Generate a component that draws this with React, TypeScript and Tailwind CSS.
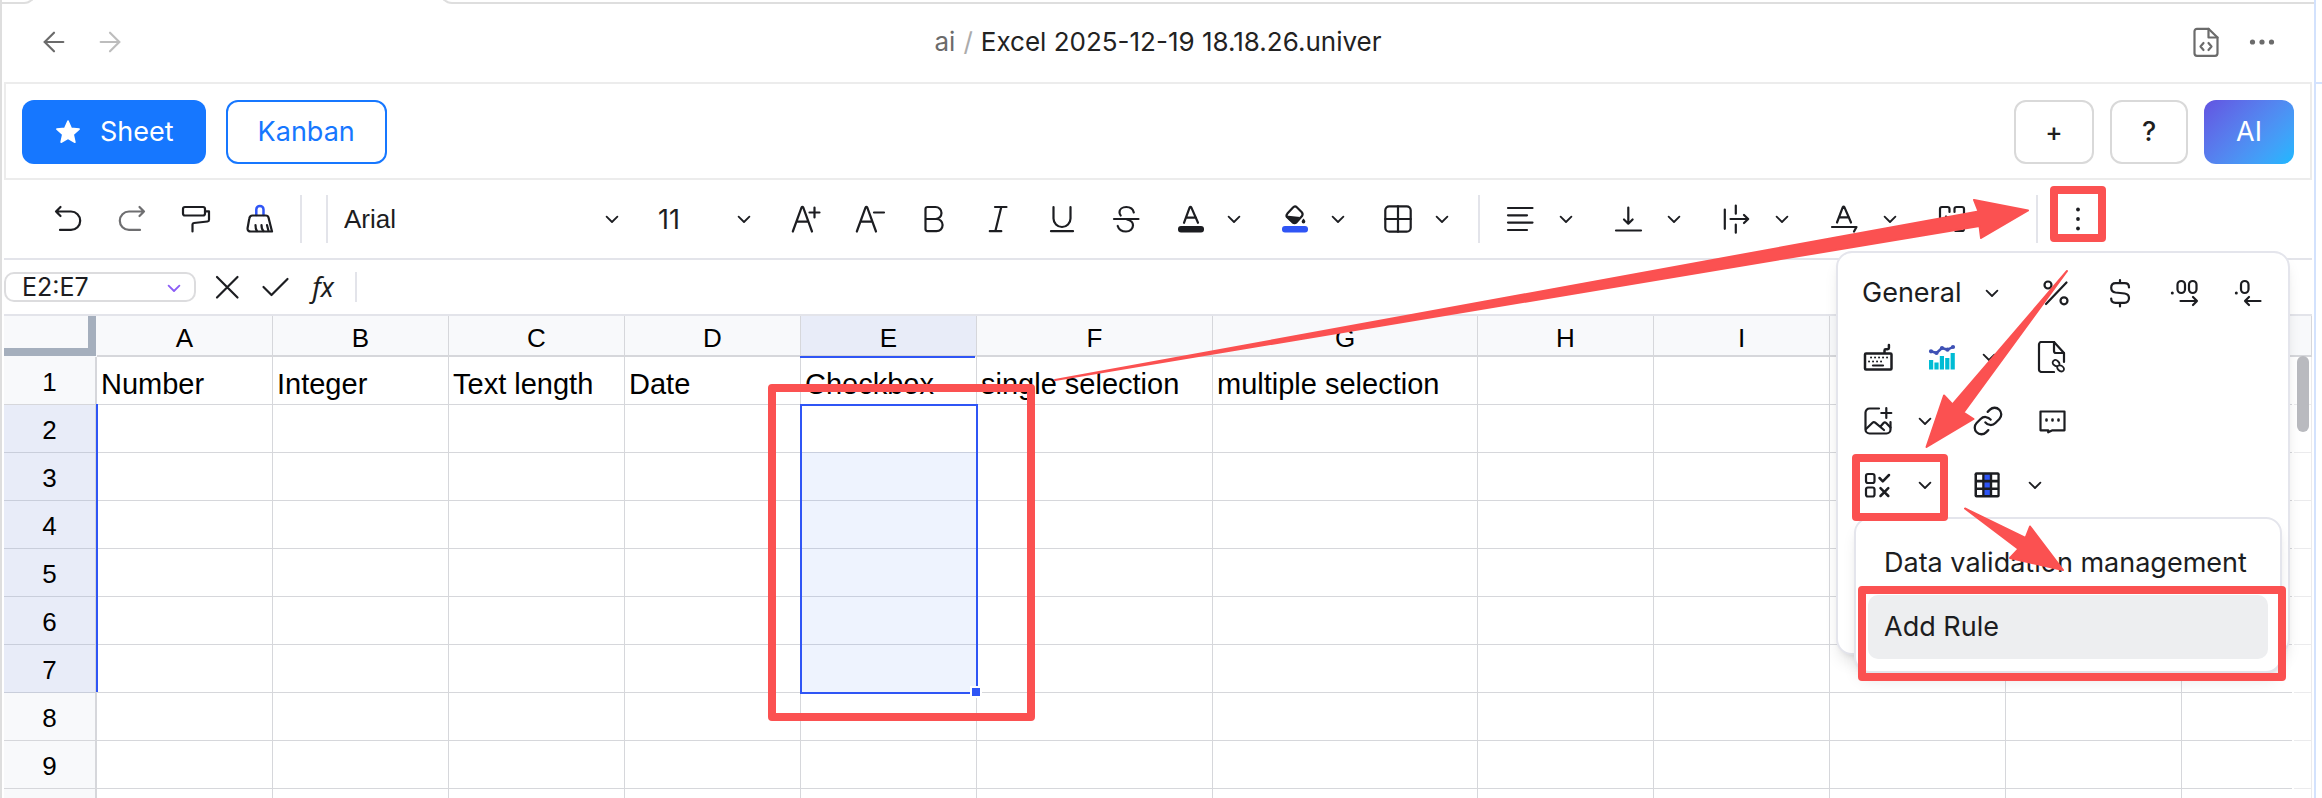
/**
 * Sheet Editor Page
 *
 * Spreadsheet view with the overflow toolbar and the data validation menu open.
 */

import type { ReactNode } from 'react'
import clsx from 'clsx'
import { ArrowLeft, ArrowRight, Link as LinkIcon } from 'lucide-react'

const COLUMNS = [
  { name: 'A', width: 'w-44', title: 'Number' },
  { name: 'B', width: 'w-44', title: 'Integer' },
  { name: 'C', width: 'w-44', title: 'Text length' },
  { name: 'D', width: 'w-44', title: 'Date' },
  { name: 'E', width: 'w-44', title: 'Checkbox' },
  { name: 'F', width: 'w-[236px]', title: 'single selection' },
  { name: 'G', width: 'w-[265px]', title: 'multiple selection' },
  { name: 'H', width: 'w-44', title: '' },
  { name: 'I', width: 'w-44', title: '' },
  { name: 'J', width: 'w-44', title: '' },
  { name: 'K', width: 'w-44', title: '' },
  { name: 'L', width: '', title: '' },
]

const ROWS = [1, 2, 3, 4, 5, 6, 7, 8, 9]

const isSelectedRow = (row: number) => row >= 2 && row <= 7

function Icon({ children, className }: { children: ReactNode; className?: string }) {
  return (
    <svg
      viewBox="0 0 32 32"
      fill="none"
      stroke="currentColor"
      strokeWidth="2.2"
      strokeLinecap="round"
      strokeLinejoin="round"
      aria-hidden="true"
      className={clsx('size-8 shrink-0', className)}
    >
      {children}
    </svg>
  )
}

function Chevron({ className }: { className?: string }) {
  return (
    <svg
      viewBox="0 0 16 16"
      fill="none"
      stroke="currentColor"
      strokeWidth="1.8"
      strokeLinecap="round"
      strokeLinejoin="round"
      aria-hidden="true"
      className={clsx('size-4 shrink-0', className)}
    >
      <path d="M2.6 5.6 8 11l5.4-5.4" />
    </svg>
  )
}

function ToolButton({ label, children, className }: { label: string; children: ReactNode; className?: string }) {
  return (
    <button
      type="button"
      aria-label={label}
      className={clsx('flex h-16 w-16 shrink-0 items-center justify-center', className)}
    >
      <Icon>{children}</Icon>
    </button>
  )
}

function MoreOptions({ label, className }: { label: string; className: string }) {
  return (
    <button
      type="button"
      aria-label={label}
      className={clsx('mr-4 flex h-16 shrink-0 items-center justify-center', className)}
    >
      <Chevron />
    </button>
  )
}

function Divider({ className }: { className?: string }) {
  return <div className={clsx('h-12 w-0.5 shrink-0 bg-[#e3e4ea]', className)} />
}

function TitleBar() {
  return (
    <header className="flex h-[78px] shrink-0 items-center justify-between px-9 pb-0.5 text-[#6b6b6b]">
      <div className="flex flex-1 items-center gap-6">
        <button type="button" aria-label="Back" className="flex size-8 items-center justify-center">
          <ArrowLeft size={32} strokeWidth={1.6} />
        </button>
        <button type="button" aria-label="Forward" className="flex size-8 items-center justify-center text-[#bdbdbd]">
          <ArrowRight size={32} strokeWidth={1.6} />
        </button>
      </div>
      <div className="flex items-center gap-2 text-[26px] leading-8">
        <a href="#ai">ai</a>
        <span className="text-[#ababab]">/</span>
        <h1 className="text-[#222222]">Excel 2025-12-19 18.18.26.univer</h1>
      </div>
      <div className="flex flex-1 items-center justify-end gap-6">
        <button type="button" aria-label="View source">
          <Icon>
            <path d="M18.5 2.8H7A2.5 2.5 0 0 0 4.5 5.3v22A2.5 2.5 0 0 0 7 29.8h18a2.5 2.5 0 0 0 2.5-2.5V11.5z" />
            <path d="M18.5 2.8v8.7h9" />
            <path d="M13.5 17 10.500 20.500l3 3.500M18.500 17l3 3.500-3 3.500" />
          </Icon>
        </button>
        <button type="button" aria-label="More options">
          <Icon>
            <g fill="currentColor" stroke="none">
              <circle cx="6.5" cy="16" r="2.6" />
              <circle cx="16" cy="16" r="2.6" />
              <circle cx="25.5" cy="16" r="2.6" />
            </g>
          </Icon>
        </button>
      </div>
    </header>
  )
}

function ViewBar() {
  return (
    <div className="flex shrink-0 items-center justify-between border-2 border-[#ececec] px-4 pt-4 pb-3.5 text-[27px] leading-8">
      <div className="flex items-center gap-5">
        <button type="button" className="flex h-16 items-center gap-[18px] rounded-xl bg-[#1677ff] px-8 text-white">
          <svg viewBox="0 0 28 28" className="size-7" fill="currentColor" aria-hidden="true">
            <path
              d="m14 3 3.2 7.3 7.9.8-5.9 5.3 1.7 7.8L14 20.2l-6.9 4 1.7-7.8-5.9-5.3 7.9-.8z"
              stroke="currentColor"
              strokeWidth="1.6"
              strokeLinejoin="round"
            />
          </svg>
          Sheet
        </button>
        <button
          type="button"
          className="flex h-16 items-center rounded-xl border-2 border-[#1677ff] px-[30px] text-[#1677ff]"
        >
          Kanban
        </button>
      </div>
      <div className="flex items-center gap-4 font-medium text-[#1f1f1f]">
        <button type="button" className="h-16 w-20 rounded-xl border-2 border-[#d9d9d9] text-[26px]">
          +
        </button>
        <button type="button" className="h-16 w-[78px] rounded-xl border-2 border-[#d9d9d9]">
          ?
        </button>
        <button
          type="button"
          className="h-16 w-[90px] rounded-xl bg-linear-135 from-[#6253e1] to-[#18b8ff] font-normal text-white"
        >
          AI
        </button>
      </div>
    </div>
  )
}

function Toolbar() {
  return (
    <div className="flex h-20 shrink-0 items-center border-b-2 border-[#e3e4ea] pl-8 text-[#1c1d21]">
      <ToolButton label="Undo">
        <path d="M4 8.500h15a9.200 9.200 0 0 1 0 18.400H8M8.500 4 4 8.500 8.500 13" />
      </ToolButton>
      <ToolButton label="Redo" className="text-[#6e6e70]">
        <path d="M28 8.500H13a9.200 9.200 0 0 0 0 18.400h11M23.500 4 28 8.500 23.500 13" />
      </ToolButton>
      <ToolButton label="Format painter">
        <rect x="3" y="4" width="22" height="8.500" rx="2" />
        <path d="M25 8.300h4v8.500c0 1-.5 1.600-1.500 1.700L14 20c-1 .1-1.500.6-1.500 1.500v7" />
      </ToolButton>
      <ToolButton label="Clear formatting">
        <path d="M12.300 12V6.500a3.600 3.600 0 0 1 7.200 0V12" stroke="#2f55f5" strokeWidth="2.500" />
        <path d="M8.500 12.500h13.300c1.500 0 2.300.6 2.700 2l3.500 14H7c-2.500 0-3.700-1.200-3.400-3.500l1.700-9.500c.3-2 1.300-3 3.200-3z" />
        <path d="M11.500 22c0 3 .5 5 1.500 6M17.500 22c0 3 .7 5 2 6M23 22l1.500 6" />
      </ToolButton>
      <Divider className="ml-2" />
      <Divider className="ml-6 bg-[#dcdcde]" />

      <div className="relative mr-4 w-[300px] shrink-0">
        <select
          aria-label="Font family"
          className="h-12 w-full appearance-none pl-4 font-['Liberation_Sans',Arial,sans-serif] text-[26px] leading-8"
          defaultValue="Arial"
        >
          <option>Arial</option>
        </select>
        <Chevron className="pointer-events-none absolute top-4 right-2" />
      </div>
      <div className="relative mr-3.5 w-[116px] shrink-0">
        <input
          aria-label="Font size"
          className="h-12 w-full pl-3.5 text-[27px] leading-8"
          defaultValue="11"
        />
        <Chevron className="pointer-events-none absolute top-4 right-2" />
      </div>

      <ToolButton label="Increase font size">
        <path d="M2.800 28.500 11.500 4.600q.9-1.600 1.800 0L22 28.500M6.500 18.700h12M24.500 4.500v10M19.500 9.500h10" />
      </ToolButton>
      <ToolButton label="Decrease font size">
        <path d="M2.800 28.500 11.500 4.600q.9-1.600 1.800 0L22 28.500M6.500 18.700h12M20 9.500h10" />
      </ToolButton>
      <ToolButton label="Bold">
        <path d="M7.500 16h10a6 6 0 0 0 0-12h-8a2 2 0 0 0-2 2v20a2 2 0 0 0 2 2.200h9a6 6 0 0 0 0-12.200" />
      </ToolButton>
      <ToolButton label="Italic">
        <path d="M13 4h11.500M7.800 28.200h11.500M19.300 4l-6 24.200" />
      </ToolButton>
      <ToolButton label="Underline">
        <path d="M7.500 4v11.500a8.500 8.500 0 0 0 17 0V4M5 28.200h22" />
      </ToolButton>
      <ToolButton label="Strikethrough">
        <path d="M4 16h24.500M23.800 9.500C23 6 20 4 16.300 4c-4 0-6.800 2.300-6.800 5.300 0 1.200.3 2.300 1.200 3.200M17 16.500c4 .8 6 2.800 6 5.800 0 3.500-3 6.200-7 6.200s-7.200-2-8.300-5.500" />
      </ToolButton>
      <ToolButton label="Text color">
        <path d="m10 19.800 5.600-15.200q.9-1.400 1.800 0L24 19.800M12 14.700h10" />
        <rect x="4" y="23" width="26" height="6.500" rx="3" fill="currentColor" stroke="none" />
      </ToolButton>
      <MoreOptions label="Text color options" className="w-6" />
      <ToolButton label="Fill color">
        <path d="M15 4.500q2-2 3.800-.2l5 5q1.500 1.800.2 3.800l-5.500 6.200q-2 1.700-4 0l-5.300-5q-1.500-1.700.2-3.700z" />
        <path d="M8 12.500 22 14l-4 5.800q-2 1.500-3.800 0L9 15z" fill="currentColor" stroke="none" />
        <path d="M25.500 15.500c-1.200 1.500-1.800 2.300-1.800 3.200a1.800 1.800 0 0 0 3.600 0c0-.9-.6-1.700-1.800-3.200z" fill="currentColor" stroke="none" />
        <rect x="4" y="23" width="26" height="6.500" rx="3" fill="#2f55f5" stroke="none" />
      </ToolButton>
      <MoreOptions label="Fill color options" className="w-6" />
      <ToolButton label="Borders">
        <rect x="3.300" y="3.300" width="25.400" height="25.400" rx="4" />
        <path d="M16 3.300v25.400M3.300 16h25.400" />
      </ToolButton>
      <MoreOptions label="Border options" className="w-6" />
      <Divider className="mr-2 ml-2" />

      <ToolButton label="Horizontal align">
        <path d="M4 5h24.500M4 12.300h19M4 19.600h24.500M4 27h19" />
      </ToolButton>
      <MoreOptions label="Horizontal align options" className="w-7" />
      <ToolButton label="Vertical align">
        <path d="M16.300 4.500v16M12 16.500l4.300 4.200 4.300-4.200M4 27.500h25" />
      </ToolButton>
      <MoreOptions label="Vertical align options" className="w-7" />
      <ToolButton label="Text wrap">
        <path d="M4.800 6.500v19.300M15.800 2.500v8.200M15.800 21.500v8.200M10.500 16H28M24 12l4.200 4-4.200 4" />
      </ToolButton>
      <MoreOptions label="Text wrap options" className="w-7" />
      <ToolButton label="Text rotation">
        <path d="m9 19.500 5.700-15.100q.9-1.400 1.800 0L23 19.500M11 14.300h10M4 24h24.500l-2.500 4.500" />
      </ToolButton>
      <MoreOptions label="Text rotation options" className="w-7" />
      <ToolButton label="Merge cells">
        <path d="M13.500 9V6a2 2 0 0 0-2-2H6a2 2 0 0 0-2 2v20a2 2 0 0 0 2 2h5.500a2 2 0 0 0 2-2v-3" />
        <path d="M18.500 9V6a2 2 0 0 1 2-2H26a2 2 0 0 1 2 2v20a2 2 0 0 1-2 2h-5.500a2 2 0 0 1-2-2v-3" />
        <path d="M5 16h7M10 13.500l2.500 2.500-2.500 2.500M27 16h-7M22 13.500 19.500 16l2.500 2.500" />
      </ToolButton>
      <MoreOptions label="Merge options" className="w-7" />
      <Divider className="mr-2 ml-2" />
      <ToolButton label="More tools">
        <g fill="currentColor" stroke="none">
          <circle cx="16" cy="6.500" r="1.900" />
          <circle cx="16" cy="16" r="1.900" />
          <circle cx="16" cy="25.500" r="1.900" />
        </g>
      </ToolButton>
    </div>
  )
}

function FormulaBar() {
  return (
    <div className="flex h-14 shrink-0 items-center border-b-2 border-[#e3e4ea] text-[#1c1d21]">
      <div className="relative w-48 shrink-0">
        <input
          aria-label="Name box"
          className="h-[30px] w-full rounded-[10px] border-2 border-[#dcdcde] pl-4 text-[25px] leading-6"
          defaultValue="E2:E7"
        />
        <Chevron className="pointer-events-none absolute top-2 right-3.5 text-[#8b5cf6]" />
      </div>
      <button type="button" aria-label="Cancel" className="ml-[15px] flex size-8 items-center justify-center">
        <Icon>
          <path d="m6 6 20.500 20.500M26.500 6 6 26.500" />
        </Icon>
      </button>
      <button type="button" aria-label="Confirm" className="ml-4 flex size-8 items-center justify-center">
        <Icon>
          <path d="m4.500 16 8 8L28.500 8" />
        </Icon>
      </button>
      <button
        type="button"
        aria-label="Insert function"
        className="ml-4 h-8 w-8 font-['Noto_Sans',sans-serif] text-[27px] leading-7 italic"
      >
        fx
      </button>
      <div className="ml-4 h-[30px] w-0.5 bg-[#e3e4ea]" />
      <input aria-label="Formula" className="h-[30px] flex-1 px-3 text-[25px]" />
    </div>
  )
}

function Grid() {
  return (
    <div className="relative min-h-0 flex-1 overflow-hidden font-['Liberation_Sans',Arial,sans-serif] text-black">
      <table className="w-full table-fixed border-separate border-spacing-0">
        <colgroup>
          <col className="w-[93px]" />
          {COLUMNS.map((column) => (
            <col key={column.name} className={column.width} />
          ))}
        </colgroup>
        <thead>
          <tr className="h-[41px] bg-[#f8f9fb]">
            <td className="relative">
              <div className="absolute inset-x-0 top-0 h-10 w-[92px] border-r-8 border-b-8 border-[#a5afbd]" />
            </td>
            {COLUMNS.map((column) => (
              <th
                key={column.name}
                scope="col"
                className={clsx(
                  'relative border-r border-b-2 border-r-[#d6d7db] border-b-[#d6d7db] p-0 pt-1 text-[26px] leading-8 font-normal',
                  column.name === 'E' && 'bg-[#e8ecf8]'
                )}
              >
                {column.name}
                {column.name === 'E' && (
                  <span className="absolute -bottom-[3px] -left-px h-0.5 w-full bg-[#2f55f5]" />
                )}
              </th>
            ))}
          </tr>
        </thead>
        <tbody>
          {ROWS.map((row) => (
            <tr key={row} className="h-12">
              <th
                scope="row"
                className={clsx(
                  'relative border-r-2 border-b border-[#d6d7db] p-0 pt-0.5 text-[26px] leading-8 font-normal',
                  isSelectedRow(row) ? 'border-b-[#c9cedb] bg-[#e8ecf8]' : 'bg-[#f8f9fb]'
                )}
              >
                {row}
                {isSelectedRow(row) && (
                  <span className="absolute -top-px -right-[3px] h-12 w-0.5 bg-[#2f55f5]" />
                )}
              </th>
              {COLUMNS.map((column) => {
                const inRange = column.name === 'E' && isSelectedRow(row)
                return (
                  <td
                    key={column.name}
                    className={clsx(
                      'border-r border-b border-[#d6d7db] p-0 pb-1 pl-1 align-bottom text-[29px] leading-8 whitespace-nowrap',
                      inRange && 'relative border-b-[#c9cfde]',
                      inRange && row > 2 && 'bg-[#eef3fe]'
                    )}
                  >
                    {row === 1 && column.title}
                    {inRange && row === 2 && (
                      <div className="absolute -top-px -left-px z-10 h-[290px] w-[calc(100%+3px)] border-2 border-[#2f55f5]">
                        <span className="absolute -right-1.5 -bottom-1.5 size-3 border-2 border-white bg-[#2f55f5]" />
                      </div>
                    )}
                  </td>
                )
              })}
            </tr>
          ))}
          {/* Rest of the sheet */}
          <tr className="h-12">
            <td className="border-r-2 border-[#d6d7db] bg-[#f8f9fb]" />
            {COLUMNS.map((column) => (
              <td key={column.name} className="border-r border-[#d6d7db]" />
            ))}
          </tr>
        </tbody>
      </table>

      {/* Vertical scrollbar */}
      <div className="absolute top-[41px] right-0 bottom-0 w-5 border-l-2 border-white bg-white/50">
        <div className="mx-auto -mt-px h-[76px] w-3 rounded-full bg-[#b9babf]" />
      </div>
    </div>
  )
}

function OverflowPanel() {
  return (
    <div className="absolute top-[169px] right-[22px] z-20 rounded-2xl border-2 border-[#e4e5ec] bg-white p-2 pb-[136px] text-[#1c1d21] shadow-lg">
      <div className="flex">
        <div className="relative mr-4 w-[162px]">
          <select
            aria-label="Number format"
            className="h-16 w-full appearance-none pl-4 text-[27px] leading-8"
            defaultValue="General"
          >
            <option>General</option>
          </select>
          <Chevron className="pointer-events-none absolute top-6 right-2" />
        </div>
        <ToolButton label="Percent">
          <circle cx="8" cy="8" r="3.500" />
          <circle cx="24" cy="23.800" r="3.500" />
          <path d="M26.500 5.500 6 27" />
        </ToolButton>
        <ToolButton label="Currency">
          <path d="M16 3v3M16 26v3.500" />
          <path d="M25 10.500c0-2.800-1.500-4.300-4.300-4.300h-9c-2.700 0-4.500 1.800-4.500 4.500 0 2.800 1.600 4.400 4.300 4.800l9.200 1c2.700.4 4.300 1.900 4.300 4.600s-1.800 4.700-4.500 4.700h-9c-2.800 0-4.300-1.600-4.300-4.300" />
        </ToolButton>
        <ToolButton label="Increase decimal">
          <circle cx="4.300" cy="16" r="1.500" fill="currentColor" stroke="none" />
          <rect x="9.500" y="4" width="7.500" height="12" rx="3.750" />
          <rect x="21" y="4" width="7.500" height="12" rx="3.750" />
          <path d="M12.500 24H29M25 20l4 4-4 4" />
        </ToolButton>
        <ToolButton label="Decrease decimal">
          <circle cx="4.300" cy="16" r="1.500" fill="currentColor" stroke="none" />
          <rect x="9" y="4" width="7.500" height="12" rx="3.750" />
          <path d="M28.500 24H13M17 20l-4 4 4 4" />
        </ToolButton>
      </div>

      <div className="flex">
        <ToolButton label="Keyboard shortcuts">
          <rect x="3" y="12.500" width="26.500" height="16" rx="1" strokeWidth="2.500" />
          <path d="M22.500 11.500V9.500q0-1.200 1.200-1.200h2q1.200 0 1.200-1.200V4" strokeWidth="2.500" />
          <path d="M9 16.500h18M7 20.500h16" strokeWidth="1.900" strokeDasharray="0.1 3.900" />
          <path d="M11 24.500h10" />
        </ToolButton>
        <ToolButton label="Insert chart">
          <g fill="#00bcd4" stroke="none">
            <rect x="3" y="19" width="4.200" height="9.500" />
            <rect x="8.400" y="21.500" width="4.200" height="7" />
            <rect x="13.800" y="15" width="4.200" height="13.500" />
            <rect x="19.200" y="17" width="4.200" height="11.500" />
            <rect x="24.600" y="12" width="4.200" height="16.500" />
          </g>
          <g stroke="#3f51b5" fill="#3f51b5">
            <path d="m5 10.300 5.500 1.700L16 7l5.500 1.700L27 6" fill="none" strokeWidth="2.500" />
            <circle cx="5" cy="10.300" r="1" />
            <circle cx="10.500" cy="12" r="1" />
            <circle cx="16" cy="7" r="1" />
            <circle cx="21.500" cy="8.700" r="1" />
            <circle cx="27" cy="6" r="1" />
          </g>
        </ToolButton>
        <MoreOptions label="Chart options" className="w-[30px]" />
        <ToolButton label="Linked document">
          <path d="M18 31H5.500A2.500 2.500 0 0 1 3 28.500v-25A2.500 2.500 0 0 1 5.500 1H18l10 11v9" />
          <path d="M18 1v9a2 2 0 0 0 2 2h8" />
          <path
            d="M21.500 25.500c-2 0-3-.6-4-1.800-1.500-1.800-.8-4 1-4.600 1.500-.5 2.600.3 3.700 1.400 1.400 1.400 1.700 2.700.8 4M21.500 25c-.8 1.500-.3 2.700 1 4s2.700 2 4.200 1.200c1.600-1 1.700-2.700.4-4.200-1.100-1.300-2.300-2-3.900-1.600"
            strokeWidth="1.800"
          />
        </ToolButton>
      </div>

      <div className="flex">
        <ToolButton label="Insert image">
          <path d="M17 3.500H7.500A4 4 0 0 0 3.500 7.500v17a4 4 0 0 0 4 4h17a4 4 0 0 0 4-4V17" />
          <path d="M24.300 3v10M19.300 8h10" />
          <path d="m4 24 6.500-6.300q1.300-1.200 2.700 0L22 25M18.500 21.500l3-3.500q1.300-1.300 2.700 0l4.300 4.500" />
        </ToolButton>
        <MoreOptions label="Image options" className="w-[30px]" />
        <button type="button" aria-label="Insert link" className="flex h-16 w-16 items-center justify-center">
          <LinkIcon size={32} strokeWidth={1.7} />
        </button>
        <ToolButton label="Comment">
          <path d="M4.500 6.500h24v18.800H16.500l-4.300 2v-2H4.500z" />
          <path d="M10.500 14.500v1M16.500 14.500v1M22.500 14.500v1" strokeWidth="2.600" />
        </ToolButton>
      </div>

      <div className="flex">
        <ToolButton label="Data validation">
          <rect x="4" y="5" width="8.500" height="9" rx="2" />
          <rect x="4" y="18.500" width="8.500" height="9" rx="2" />
          <path d="m17.500 9 3.300 3.300L27 6M18.500 19.200l7.800 7.800M26.300 19.200 18.500 27" strokeWidth="2.500" />
        </ToolButton>
        <MoreOptions label="Data validation options" className="w-[30px]" />
        <ToolButton label="Table">
          <rect x="2.500" y="3.300" width="25.200" height="25.200" rx="2" fill="currentColor" stroke="none" />
          <path
            d="M5 5.800h5.200v5H5zM5 13.500h5.200v5H5zM5 21h5.200v5H5zM20.200 5.800h5.200v5h-5.200zM20.200 13.500h5.200v5h-5.200zM20.200 21h5.200v5h-5.200z"
            fill="#fff"
            stroke="none"
          />
          <path
            d="M12.500 5.800h5.300v5h-5.300zM12.500 13.500h5.300v5h-5.300zM12.500 21h5.300v5h-5.300z"
            fill="#2f55f5"
            stroke="none"
          />
        </ToolButton>
        <MoreOptions label="Table options" className="w-[30px]" />
      </div>

      {/* Data validation menu */}
      <div
        role="menu"
        className="absolute top-[264px] left-4 w-[428px] rounded-2xl border-2 border-[#e4e5ec] bg-white p-3 text-[27px] leading-8 whitespace-nowrap shadow-lg"
      >
        <button type="button" role="menuitem" className="block h-16 w-full rounded-[10px] px-4 text-left">
          Data validation management
        </button>
        <button type="button" role="menuitem" className="block h-16 w-full rounded-[10px] bg-[#edeef0] px-4 text-left">
          Add Rule
        </button>
      </div>
    </div>
  )
}

/** Red boxes and arrows that walk through the steps. */
function Annotations() {
  return (
    <svg className="pointer-events-none absolute inset-0 z-30 h-full w-full" aria-hidden="true">
      <g fill="none" stroke="#fb5151" strokeWidth="8" strokeLinejoin="round">
        <rect x="772" y="388" width="259" height="329" />
        <rect x="2054" y="190" width="48" height="48" />
        <rect x="1856" y="458" width="88" height="59" />
        <rect x="1862" y="590" width="420" height="87" />
      </g>
      <g fill="#fb5151" stroke="#fb5151" strokeWidth="2" strokeLinejoin="round">
        <path d="M1055 380 1978.500 211.500 1974 200 2028 210.500 1981 238 1979.500 226z" />
        <path d="m2067 271-114.500 133.500-8.500-9-17.500 51.500 47-28-10-6.500z" />
        <path d="m1965 508.500 60.500 29.500 4.500-11.500 33 43.500-53-12 8.500-9z" />
      </g>
    </svg>
  )
}

export default function App() {
  return (
    <div className="relative flex h-screen overflow-hidden bg-white font-['Inter',sans-serif]">
      <div className="flex min-w-0 flex-1 flex-col border-l-2 border-[#dedede]">
        {/* Bottom edge of the tab strip */}
        <div className="flex h-1 shrink-0 items-end justify-between overflow-hidden">
          <div className="h-5 w-[34px] shrink-0 rounded-br-xl border-r-2 border-b-2 border-[#dedede]" />
          <div className="ml-[404px] h-5 flex-1 rounded-bl-xl border-b-2 border-l-2 border-[#dedede]" />
        </div>
        <TitleBar />
        <main className="relative mx-0.5 flex min-h-0 flex-1 flex-col">
          <ViewBar />
          <Toolbar />
          <FormulaBar />
          <Grid />
          <OverflowPanel />
        </main>
      </div>
      <div className="w-2 shrink-0 border-l-2 border-[#d3e2fd]">
        <div className="mt-[82px] h-0.5 bg-[#d3e2fd]" />
      </div>
      <Annotations />
    </div>
  )
}
